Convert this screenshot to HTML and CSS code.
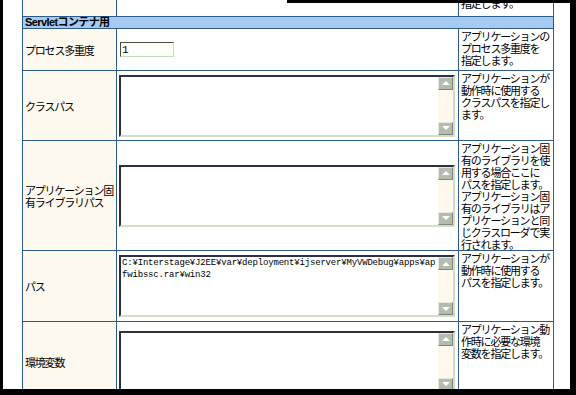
FILE: index.html
```html
<!DOCTYPE html>
<html>
	<head>
		<meta charset="UTF-8">
		<title>Servletコンテナ用</title>
		<link rel="stylesheet" href="styles.css">
	</head>
	<body>
		<div class="frame">
			<table class="prop-table" border="0" cellpadding="0" cellspacing="0">
				<colgroup>
					<col class="col-label">
					<col class="col-ctrl">
					<col class="col-desc">
				</colgroup>
				<tr class="row-cut">
					<td class="label"></td>
					<td class="ctrl"></td>
					<td class="desc">指定します。</td>
				</tr>
				<tr class="row-head">
					<th colspan="3">Servletコンテナ用</th>
				</tr>
				<tr class="row-proc">
					<td class="label">プロセス多重度</td>
					<td class="ctrl"><input type="text" class="num-input" value="1"></td>
					<td class="desc">アプリケーションの<br>プロセス多重度を<br>指定します。</td>
				</tr>
				<tr class="row-cp">
					<td class="label">クラスパス</td>
					<td class="ctrl">
						<div class="area">
							<textarea></textarea>
							<div class="sbar"><span class="sbtn up"></span><span class="strack"></span><span class="sbtn down"></span></div>
						</div>
					</td>
					<td class="desc">アプリケーションが<br>動作時に使用する<br>クラスパスを指定し<br>ます。</td>
				</tr>
				<tr class="row-lib">
					<td class="label">アプリケーション固<br>有ライブラリパス</td>
					<td class="ctrl">
						<div class="area">
							<textarea></textarea>
							<div class="sbar"><span class="sbtn up"></span><span class="strack"></span><span class="sbtn down"></span></div>
						</div>
					</td>
					<td class="desc">アプリケーション固<br>有のライブラリを使<br>用する場合ここに<br>パスを指定します。<br>アプリケーション固<br>有のライブラリはア<br>プリケーションと同<br>じクラスローダで実<br>行されます。</td>
				</tr>
				<tr class="row-path">
					<td class="label">パス</td>
					<td class="ctrl">
						<div class="area">
							<textarea>C:¥Interstage¥J2EE¥var¥deployment¥ijserver¥MyVWDebug¥apps¥apfwibssc.rar¥win32</textarea>
							<div class="sbar"><span class="sbtn up"></span><span class="strack"></span><span class="sbtn down"></span></div>
						</div>
					</td>
					<td class="desc">アプリケーションが<br>動作時に使用する<br>パスを指定します。</td>
				</tr>
				<tr class="row-env">
					<td class="label">環境変数</td>
					<td class="ctrl">
						<div class="area">
							<textarea></textarea>
							<div class="sbar"><span class="sbtn up"></span><span class="strack"></span><span class="sbtn down"></span></div>
						</div>
					</td>
					<td class="desc">アプリケーション動<br>作時に必要な環境<br>変数を指定します。</td>
				</tr>
			</table>
		</div>
	</body>
</html>
```

FILE: styles.css
```css
html, body {
	margin: 0;
	padding: 0;
}
body {
	width: 576px;
	height: 395px;
	overflow: hidden;
	background: #000;
	font-family: "Noto Sans CJK JP", sans-serif;
	font-size: 11px;
	color: #000;
}
.frame {
	position: relative;
	margin-left: 3px;
	width: 567px;
	height: 389px;
	background: #fff;
	overflow: hidden;
}
/* frame edge of the capture, lies over the cut row */
.frame::before {
	content: "";
	position: absolute;
	top: 0;
	left: 284px;
	right: 0;
	height: 3px;
	background: #000;
	z-index: 2;
}

.prop-table {
	margin: -5px 0 0 19px;
	width: 531px;
	table-layout: fixed;
	border-collapse: collapse;
	border-left: 1px solid #3d8296;
}
.col-label { width: 94px; }
.col-ctrl { width: 342px; }
.col-desc { width: 95px; }

.prop-table td,
.prop-table th {
	border: 1px solid #2c5b8a;
	padding: 0;
	line-height: 12px;
	letter-spacing: -1.2px;
}
.prop-table td.label {
	background: #fef9ee;
	padding-left: 2px;
	vertical-align: middle;
	white-space: nowrap;
}
.prop-table td.ctrl {
	padding: 0 2px;
	vertical-align: middle;
}
.prop-table td.desc {
	padding: 1px 0 0 2px;
	vertical-align: top;
	white-space: nowrap;
}

.row-cut { height: 21px; }
.row-head { height: 12px; }
.row-proc { height: 42px; }
.row-cp { height: 70px; }
.row-lib { height: 109px; }
.row-path { height: 71px; }
.row-env { height: 80px; }

.prop-table th {
	background: #a6caf0;
	text-align: left;
	padding-left: 2px;
	font-family: "Liberation Sans", "Noto Sans CJK JP", sans-serif;
	font-weight: bold;
	font-size: 11px;
	letter-spacing: -0.6px;
	line-height: 11px;
}

.num-input {
	display: block;
	box-sizing: border-box;
	margin-left: 1px;
	width: 54px;
	height: 15px;
	padding: 0 1px;
	border: 1px solid;
	border-color: #4a4a3e #c8dcc0 #c8dcc0 #4a4a3e;
	background: #fffffa;
	font-family: "Liberation Mono", monospace;
	font-size: 11px;
	line-height: 13px;
	outline: none;
}

.area {
	display: flex;
	box-sizing: border-box;
	width: 336px;
	height: 62px;
	border: 2px solid;
	border-color: #2e2e3e #d4dccc #d4dccc #2e2e3e;
	background: #fff;
}
.area textarea {
	flex: 1;
	margin: 0;
	padding: 0 1px;
	border: 0;
	resize: none;
	overflow: hidden;
	outline: none;
	background: #fff;
	font-family: "Liberation Mono", monospace;
	font-size: 9px;
	letter-spacing: -0.18px;
	line-height: 12px;
	color: #000;
	word-break: break-all;
}
.sbar {
	display: flex;
	flex-direction: column;
	width: 15px;
	background: #fef9ec;
}
.strack {
	flex: 1;
}
.sbtn {
	display: flex;
	align-items: center;
	justify-content: center;
	box-sizing: border-box;
	height: 13px;
	background: #b4bcb0;
	border: 1px solid;
	border-color: #e4e8e0 #7e8878 #7e8878 #e4e8e0;
}
.sbtn::after {
	content: "";
	width: 0;
	height: 0;
	border-left: 4px solid transparent;
	border-right: 4px solid transparent;
}
.sbtn.up::after {
	border-bottom: 4px solid #fff;
}
.sbtn.down::after {
	border-top: 4px solid #fff;
}
```
